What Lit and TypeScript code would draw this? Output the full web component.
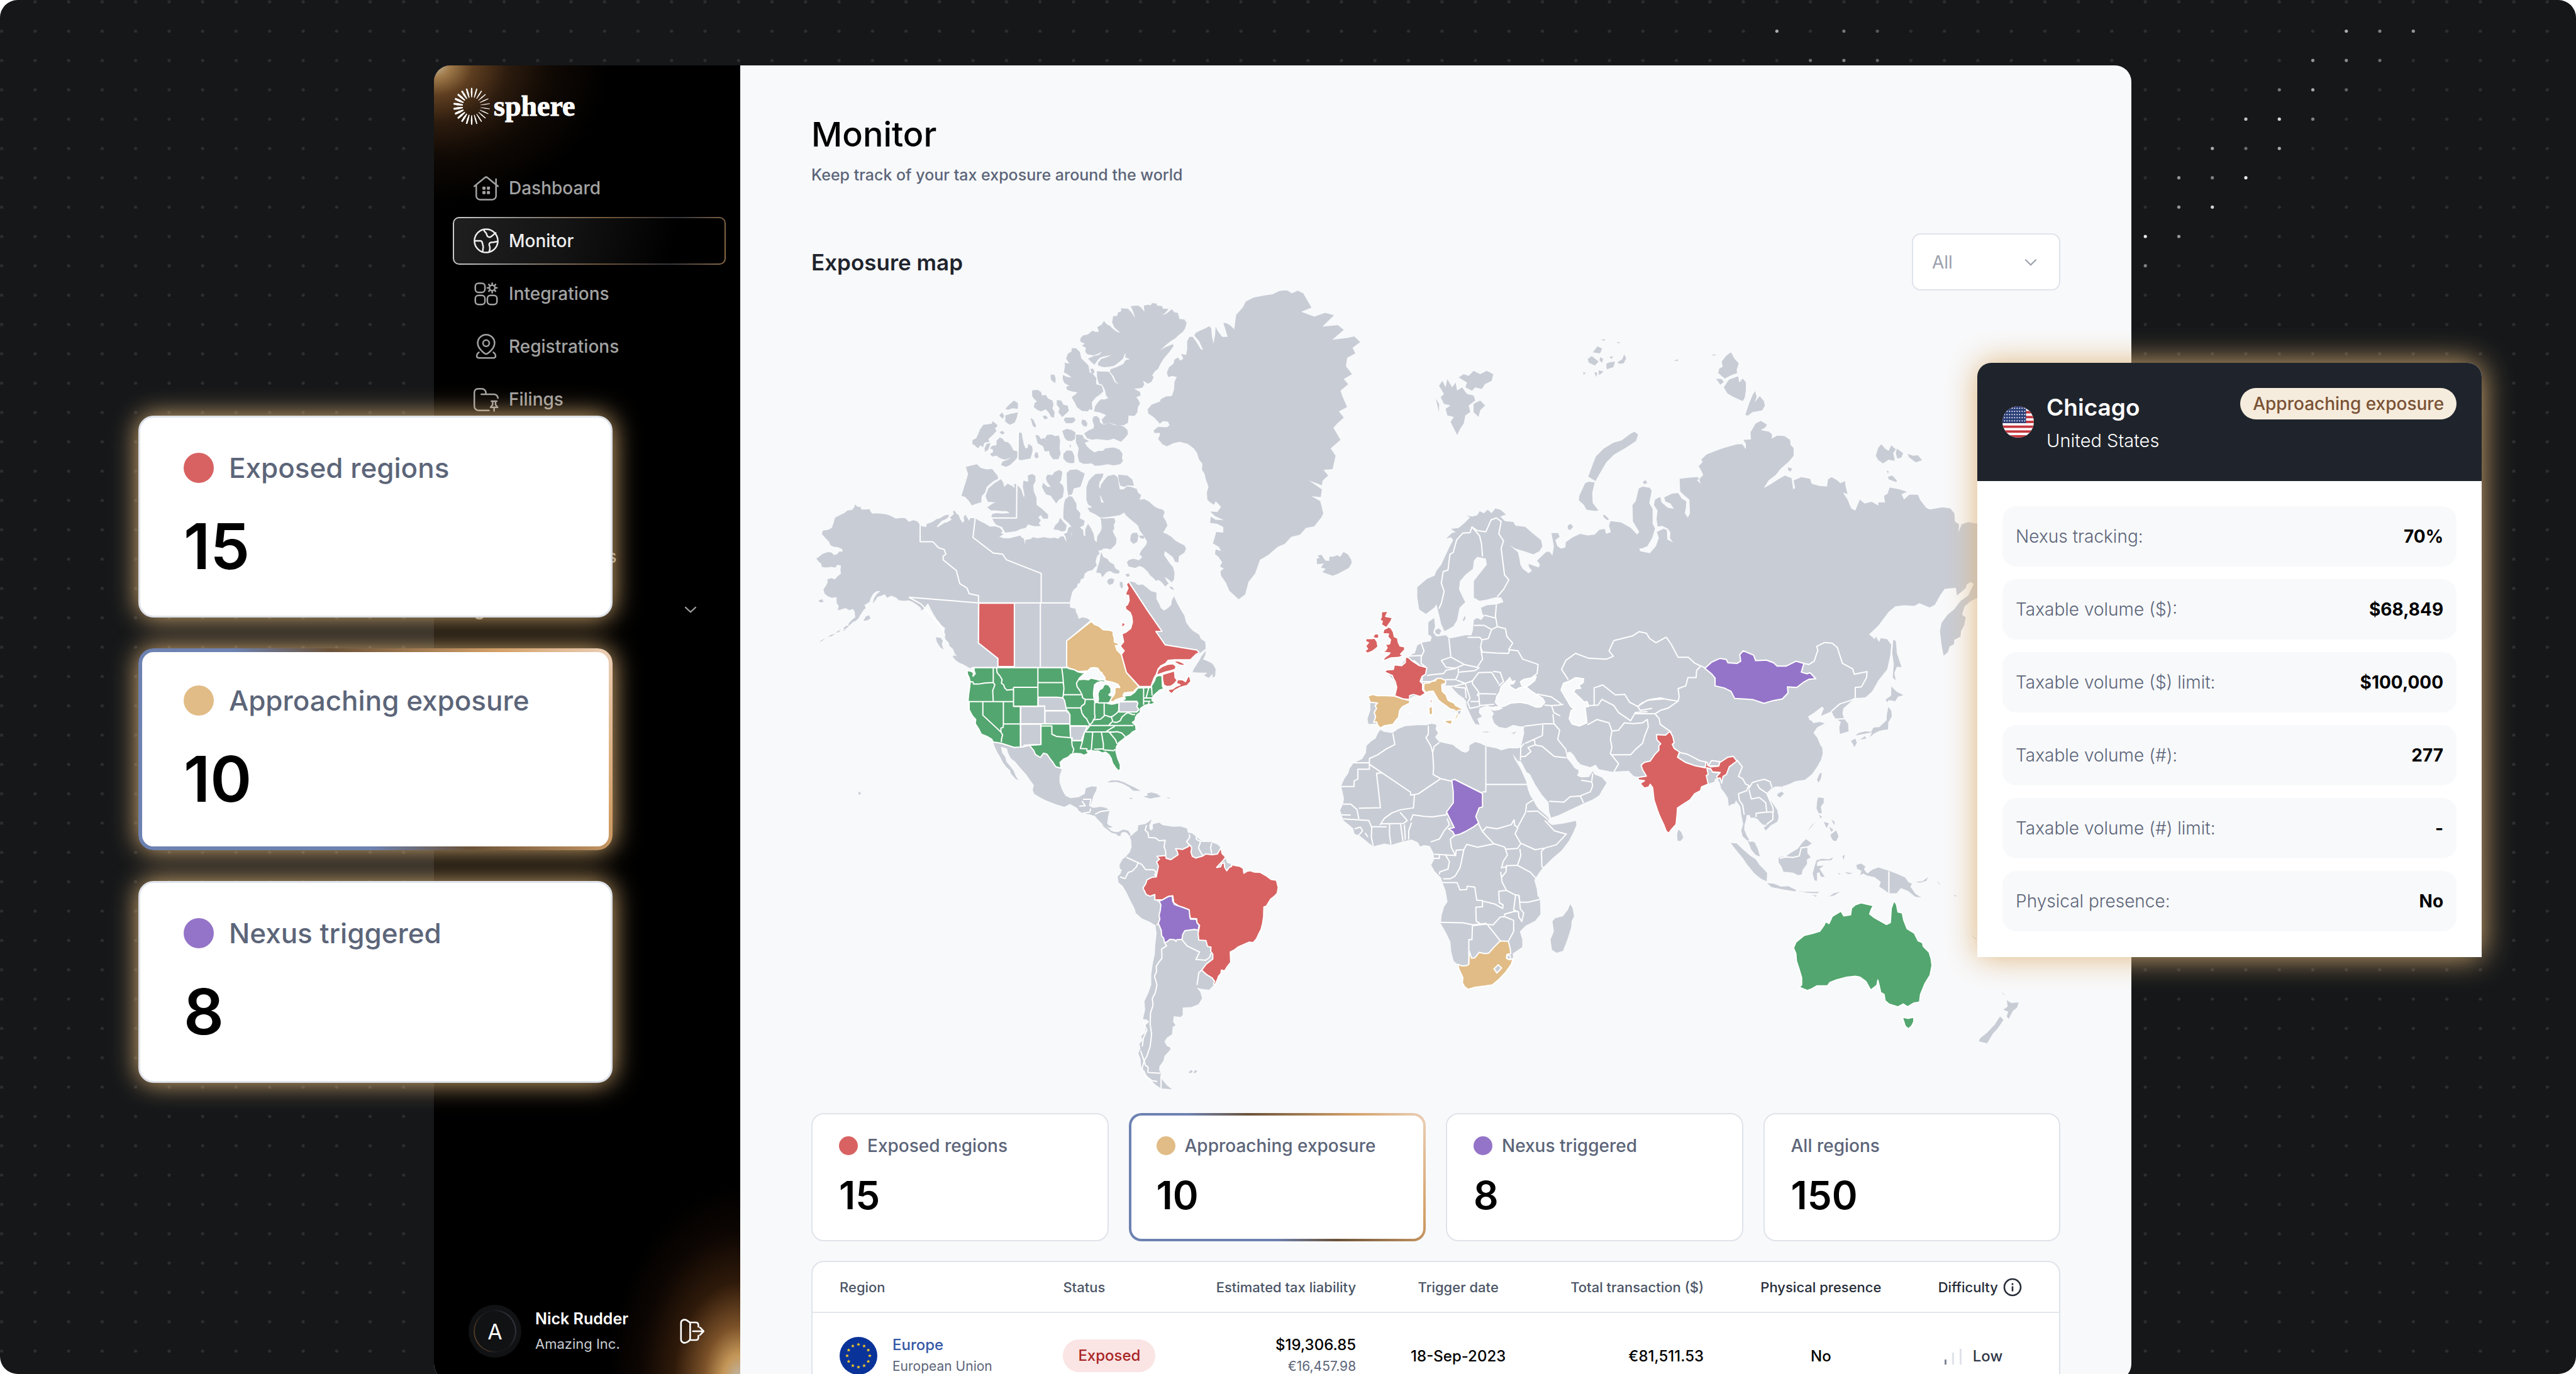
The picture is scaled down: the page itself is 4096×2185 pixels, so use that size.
import { LitElement, html, svg, css } from "lit";
import { customElement, property } from "lit/decorators.js";

type Frame = { t: string; land?: string[]; lines?: string[]; regions?: [string, string][] };

const RED = "#d86262";
const GOLD = "#e1bc86";
const GREEN = "#53a66f";
const PURPLE = "#9474c8";
const GREY = "#c8ccd5";
const SEA = "#f8f9fb";

/* Map sheets. Every sheet holds its outlines in its own grid and is placed on the map by its transform. */
const arctic: Frame = {
  t: "translate(1500 530) scale(.510204 .478316)",
  land: [
    // Alaska and mainland Canada
    "M184,858 192,868 203,868 206,878 222,878 236,877 240,886 246,894 262,893 280,895 298,897 314,903 332,914 350,911 366,912 380,926 396,920 410,924 420,937 428,944 442,947 446,934 458,930 470,924 480,916 492,913 504,905 514,900 526,898 524,908 514,916 500,922 490,934 482,944 484,948 498,938 510,930 520,928 536,918 530,908 538,902 544,896 541,886 546,882 554,895 562,900 566,914 576,930 582,922 580,908 586,898 592,908 600,922 604,912 622,912 640,924 656,932 676,945 694,944 712,950 722,962 716,970 726,974 710,984 726,990 748,990 770,984 788,980 790,986 800,992 804,1014 806,996 824,994 832,986 850,990 872,986 896,990 912,988 926,992 932,984 944,982 956,1006 952,984 946,974 958,968 962,950 972,944 980,952 972,960 974,978 984,970 990,952 1004,948 1016,958 1018,978 1024,984 1024,956 1034,934 1044,950 1054,972 1058,998 1066,1006 1068,982 1080,964 1084,950 1082,924 1080,912 1100,914 1112,912 1130,912 1134,926 1128,938 1130,952 1124,962 1130,976 1138,992 1136,1012 1128,1022 1116,1034 1104,1030 1090,1030 1084,1036 1072,1038 1076,1050 1068,1058 1064,1070 1062,1082 1066,1096 1058,1104 1050,1114 1034,1118 1022,1128 1018,1146 1008,1150 1004,1164 996,1168 994,1180 984,1188 976,1200 972,1218 968,1236 968,1258 974,1262 988,1264 990,1278 996,1290 1000,1304 1014,1298 1030,1302 1042,1310 956,1388 954,1491 612,1491 604,1497 592,1490 580,1482 566,1476 552,1466 540,1452 544,1446 556,1450 548,1440 540,1420 528,1410 526,1398 514,1384 508,1362 512,1340 500,1330 490,1316 482,1306 470,1286 458,1262 450,1244 444,1250 436,1264 424,1272 424,1262 410,1250 396,1240 380,1232 366,1234 344,1232 334,1222 316,1214 300,1222 292,1208 280,1214 266,1218 256,1234 248,1244 252,1226 262,1208 276,1196 262,1196 250,1206 240,1224 236,1238 218,1250 222,1262 214,1270 204,1286 196,1302 186,1312 176,1316 162,1330 150,1332 140,1342 150,1346 138,1352 146,1344 158,1336 160,1322 172,1308 184,1298 182,1276 176,1266 162,1270 148,1262 130,1268 120,1270 124,1254 116,1242 116,1220 98,1222 84,1216 72,1206 68,1190 78,1174 84,1160 82,1150 96,1146 110,1150 120,1138 132,1128 130,1112 132,1096 118,1094 112,1104 96,1102 78,1104 62,1102 60,1090 50,1080 42,1070 52,1062 66,1050 84,1044 98,1046 106,1056 118,1052 126,1042 138,1042 136,1032 118,1024 108,1024 94,1018 88,1004 76,990 62,974 66,960 84,958 98,950 104,934 110,910 128,900 144,892 156,882 172,880 180,870Z",
    "M132,1346 120,1352 112,1358 124,1356Z M110,1362 96,1366 84,1374 98,1372Z M74,1380 60,1388 52,1396 66,1388Z M222,1296 234,1290 240,1302 228,1310 214,1312Z M50,1232 64,1228 68,1238 56,1240Z M478,1376 496,1378 504,1390 500,1402 506,1424 494,1414 482,1394Z",
    // Labrador and Newfoundland
    "M1184,1158 1204,1162 1216,1172 1234,1170 1250,1184 1264,1196 1284,1202 1284,1228 1294,1246 1300,1262 1312,1272 1326,1262 1338,1250 1340,1232 1348,1216 1358,1240 1368,1260 1386,1292 1392,1318 1404,1336 1416,1350 1440,1366 1446,1382 1462,1394 1464,1420 1452,1430 1440,1440 1432,1427 1316,1405 1282,1355 1304,1354Z",
    "M1464,1428 1462,1446 1454,1462 1468,1468 1484,1476 1492,1484 1500,1500 1498,1528 1488,1532 1490,1518 1474,1534 1458,1524 1470,1514 1448,1514 1416,1512 1420,1500 1430,1484 1442,1464 1448,1450Z",
    // Baffin Island and neighbours
    "M1028,792 1036,768 1048,752 1062,740 1090,738 1088,750 1076,772 1074,790 1088,808 1078,824 1082,850 1092,852 1078,820 1080,784 1094,762 1106,748 1130,742 1142,752 1146,776 1150,800 1164,800 1176,788 1190,790 1212,798 1216,812 1228,822 1222,840 1240,838 1258,848 1276,866 1290,874 1306,878 1314,888 1308,906 1318,922 1324,940 1314,958 1308,968 1322,974 1338,984 1354,1000 1370,1010 1386,1018 1392,1030 1386,1046 1366,1060 1364,1084 1352,1082 1344,1064 1328,1050 1314,1040 1312,1056 1322,1072 1334,1090 1344,1102 1350,1124 1348,1150 1340,1162 1330,1152 1314,1140 1320,1154 1328,1166 1316,1178 1302,1160 1290,1152 1282,1156 1272,1144 1262,1136 1252,1120 1236,1104 1222,1098 1206,1106 1182,1100 1176,1084 1184,1074 1200,1070 1220,1076 1232,1064 1222,1052 1230,1036 1246,1016 1250,1004 1240,984 1224,962 1216,940 1202,928 1186,914 1172,900 1166,890 1150,900 1130,904 1100,908 1080,910 1062,898 1040,886 1032,872 1050,870 1034,858 1028,840Z",
    "M1144,742 1178,746 1196,762 1202,786 1178,784 1168,790 1152,786 1146,764Z M1082,1044 1090,1064 1104,1070 1112,1082 1128,1092 1134,1108 1150,1118 1146,1128 1128,1126 1116,1118 1104,1120 1094,1132 1086,1142 1080,1126 1064,1124 1070,1100 1076,1080Z",
    "M1106,1152 1118,1146 1130,1150 1126,1166 1112,1172 1104,1162Z M1150,1160 1160,1162 1162,1180 1156,1186 1150,1174Z M1170,1130 1184,1128 1186,1138 1176,1140Z M1196,970 1212,968 1218,980 1214,1004 1200,1012 1188,1000 1190,980Z M1220,980 1238,980 1240,992 1226,990Z M1330,1178 1342,1180 1348,1192 1338,1188Z",
    // Banks, Victoria, King William, Prince of Wales, Somerset, Boothia
    "M588,712 628,702 642,716 664,722 684,720 704,748 706,758 688,768 664,790 658,812 646,826 644,850 624,856 610,862 600,846 586,830 572,824 580,796 588,770 596,740Z",
    "M716,760 724,772 728,790 740,778 756,786 766,794 764,778 774,780 773,911 680,911 684,896 700,892 720,894 748,892 738,884 720,884 698,882 680,882 666,870 684,856 696,850 668,848 664,838 660,826 670,796 690,778Z",
    "M776,782 790,800 800,832 802,820 796,790 798,766 816,770 814,746 830,740 842,748 842,768 834,784 836,808 846,832 846,860 866,876 888,898 888,914 870,914 862,900 852,908 862,920 854,932 862,942 842,944 826,940 816,936 806,950 788,954 772,962 750,966 732,968 720,946 700,938 690,926 684,912 773,911Z",
    "M932,910 942,924 956,940 952,960 940,964 924,958 908,956 914,940 926,928Z M880,756 886,742 904,744 912,732 930,724 940,732 936,764 930,772 942,784 946,800 942,830 928,840 918,854 908,840 898,824 882,820 874,808 866,790 870,774 886,790 898,790 884,770Z M956,736 968,724 994,722 1010,732 1022,738 1016,760 1006,790 982,796 976,818 962,824 958,800Z M964,826 976,828 992,856 992,876 1006,892 1004,912 1022,922 1018,940 1004,948 988,970 976,976 970,960 978,950 962,930 944,914 944,890 946,860 950,840Z",
    // Parry and Sverdrup islands
    "M612,608 626,600 634,582 640,566 652,548 668,546 682,544 686,534 700,546 704,552 694,562 700,572 688,586 670,604 674,614 656,618 650,636 642,628 632,640 620,628 612,624Z M656,640 664,622 678,620 670,644 658,654Z M700,610 712,598 722,602 730,614 742,616 752,628 762,648 778,652 776,676 764,690 750,704 734,712 716,704 722,692 740,684 754,676 730,684 712,678 700,668 684,672 676,662 688,654 686,644 676,640 684,630 700,628Z M780,600 782,578 792,580 796,606 800,626 806,640 814,638 816,622 830,632 832,648 824,680 808,682 792,686 778,684Z",
    "M710,576 722,572 730,580 720,586Z M842,656 850,656 854,674 844,680 838,670Z M732,512 750,506 778,500 774,520 766,540 748,548 732,536Z M732,486 748,468 764,454 778,464 778,486 758,484 742,490Z M710,512 720,500 728,514 722,524Z M824,522 834,528 844,550 842,560 832,552Z",
    "M830,414 850,412 862,420 866,434 880,432 888,446 904,454 908,470 904,484 912,500 910,520 900,518 890,500 880,488 862,496 846,488 836,478 840,462 848,458 836,446 830,436Z M920,452 936,454 944,470 960,474 964,494 950,508 940,518 926,500 930,484 920,470Z M868,514 880,512 888,522 876,528Z M950,520 984,520 988,532 976,542 954,542 946,530Z M898,352 912,354 916,370 914,386 904,378 898,370Z",
    "M842,588 854,590 862,604 872,600 888,612 876,602 884,588 900,586 914,592 928,590 932,610 930,640 934,660 926,682 906,682 894,664 892,650 876,652 870,632 850,620Z M944,662 956,648 976,650 984,670 984,696 970,698 956,694 944,680Z M966,626 972,628 970,640Z M1012,528 1024,530 1032,544 1028,556 1016,552 1010,542Z M940,572 956,564 974,568 988,578 986,604 974,612 958,610 948,598Z",
    "M990,586 1014,588 1020,602 1038,612 1022,618 1030,632 1042,644 1058,656 1072,650 1088,650 1098,640 1128,636 1148,644 1154,652 1160,660 1158,680 1162,688 1152,702 1128,706 1104,702 1084,706 1060,708 1046,698 1034,700 1016,700 1002,692 996,668 1000,640 990,616Z",
    "M1020,582 1036,570 1054,562 1056,552 1050,530 1054,516 1066,514 1076,524 1078,540 1092,548 1110,540 1132,550 1152,550 1166,556 1178,568 1180,584 1168,600 1154,614 1140,608 1128,602 1108,608 1088,606 1066,604 1048,606 1030,600Z",
    // Ellesmere and Axel Heiberg
    "M1122,150 1126,124 1140,124 1144,110 1156,106 1154,94 1180,96 1194,112 1206,132 1200,110 1190,86 1218,84 1228,92 1240,108 1238,84 1256,80 1262,84 1268,74 1284,76 1286,84 1304,86 1308,96 1328,96 1318,110 1304,122 1322,114 1340,98 1350,110 1362,112 1368,136 1386,138 1394,152 1388,174 1380,186 1366,198 1352,212 1336,222 1320,236 1298,258 1316,246 1344,234 1346,242 1330,266 1312,288 1298,312 1290,330 1278,340 1268,356 1274,362 1266,380 1252,388 1242,380 1234,378 1240,390 1232,404 1202,408 1224,420 1226,434 1210,440 1216,448 1224,464 1216,480 1214,500 1204,514 1182,512 1180,540 1164,550 1140,550 1112,540 1090,546 1084,528 1100,510 1076,500 1056,496 1060,476 1072,458 1082,448 1094,450 1108,444 1100,434 1096,414 1086,392 1074,388 1068,368 1066,340 1110,342 1120,356 1132,382 1148,392 1136,380 1128,360 1114,342 1116,332 1142,322 1162,312 1172,296 1188,292 1170,286 1172,268 1182,254 1168,274 1162,290 1152,300 1130,318 1112,322 1092,324 1072,318 1070,308 1082,292 1104,284 1120,276 1090,282 1076,288 1064,304 1058,314 1046,304 1034,290 1056,280 1074,276 1086,262 1070,272 1054,278 1032,274 1024,264 1026,248 1012,240 1022,232 1006,224 1006,212 1016,200 1034,196 1050,182 1062,186 1074,186 1068,168 1084,158 1092,144 1104,158 1114,162 1122,172 1140,186 1152,190 1140,178 1130,168Z",
    "M974,250 990,250 1004,264 1010,290 1026,306 1036,318 1040,344 1054,352 1064,366 1064,390 1084,396 1090,418 1078,430 1062,442 1048,460 1050,490 1038,488 1034,496 1012,494 994,480 986,462 974,440 986,432 996,422 976,418 958,412 954,400 966,396 948,386 942,372 942,354 958,362 974,364 958,350 946,344 950,318 948,306 966,310 954,290 960,272 974,262Z M1042,330 1054,330 1058,344 1048,352Z",
    // Greenland
    "M1568,176 1552,160 1538,152 1528,152 1534,170 1544,206 1524,206 1508,184 1500,166 1498,200 1492,232 1486,200 1484,172 1476,164 1464,172 1442,182 1428,190 1422,200 1440,222 1454,256 1446,254 1430,226 1416,206 1404,206 1396,224 1396,256 1392,276 1374,272 1382,290 1372,298 1362,286 1350,294 1346,310 1330,324 1322,344 1326,362 1342,358 1358,362 1350,380 1348,412 1340,436 1318,438 1300,448 1296,458 1266,470 1252,488 1254,504 1276,520 1288,534 1296,544 1308,534 1326,536 1332,550 1322,558 1290,556 1274,570 1276,580 1296,580 1296,590 1290,604 1306,624 1322,632 1346,620 1368,614 1398,622 1420,640 1432,658 1440,684 1452,700 1450,722 1460,740 1464,760 1474,790 1468,812 1470,840 1480,850 1494,860 1500,846 1520,868 1506,888 1480,886 1498,904 1530,920 1500,918 1482,906 1480,930 1506,934 1528,946 1528,968 1502,966 1496,990 1490,1010 1512,1024 1520,1040 1500,1034 1498,1052 1510,1062 1524,1084 1516,1100 1530,1108 1518,1118 1520,1136 1538,1164 1550,1194 1568,1212 1584,1228 1608,1209 1620,1160 1644,1128 1662,1074 1692,1055 1728,1023 1752,1012 1776,985 1808,976 1830,950 1860,944 1886,909 1893,893 1882,846 1850,826 1884,830 1888,800 1840,764 1888,784 1891,765 1911,746 1894,724 1927,721 1938,669 1920,640 1956,607 1930,560 1944,543 1968,520 1950,496 1980,479 1964,440 1956,415 1984,390 1968,370 1998,351 1976,320 1980,287 2010,270 2000,248 2028,226 2006,204 1980,210 1926,217 1968,178 1946,160 1890,166 1932,121 1900,112 1860,127 1812,108 1850,92 1836,66 1820,36 1800,26 1778,36 1758,22 1730,28 1708,40 1680,44 1640,52 1610,68 1600,90 1575,120Z",
  ],
  lines: [
    "M421,937 421,1004 468,1004 488,1027 509,1034 515,1052 505,1060 505,1074 553,1116 566,1167 592,1184 600,1206 634,1214 634,1398 705,1458 705,1491",
    "M380,1220 634,1242 968,1242 M380,1220 400,1232 424,1246 450,1276 476,1310 500,1340 512,1370 M622,912 614,987 688,1048 722,1052 736,1074 863,1127 863,1242 M765,1242 765,1491 M860,1242 860,1491 M779,576 778,690 M774,780 773,911 680,911",
  ],
  regions: [[RED, "M635,1243 765,1243 765,1490 705,1490 705,1458 634,1398Z"]],
};

const svalbard: Frame = {
  t: "scale(3.0612)",
  land: [
    "M876,235 878,232 880,236 881,231 884,236 886,233 887,238 890,236 893,240 897,241 898,244 894,247 895,251 892,253 891,258 889,261 887,265 885,261 883,257 885,254 881,253 880,249 883,247 879,246 877,242 879,240Z M888,230 891,228 894,229 897,226 901,228 905,226 909,228 908,232 904,234 902,237 898,236 896,238 892,236 893,233Z M897,246 901,244 904,247 901,250 900,254 897,251Z M874,243 876,246 876,251Z",
  ],
};

const states: Frame = {
  t: "translate(1500 1050) scale(.510204 .333333)",
  land: [
    // Mexico and Central America
    "M688,1004 714,1006 764,1032 800,1030 820,1022 838,1052 846,1072 862,1088 872,1066 884,1070 898,1098 908,1118 914,1140 938,1152 930,1190 930,1226 940,1270 952,1300 970,1314 1000,1308 1012,1298 1022,1290 1026,1258 1048,1248 1066,1250 1064,1270 1054,1300 1050,1320 1044,1348 1042,1362 1054,1368 1080,1362 1100,1368 1112,1384 1108,1410 1104,1456 1110,1466 1124,1474 1112,1480 1100,1470 1086,1458 1068,1430 1060,1414 1040,1404 1014,1398 1000,1384 994,1368 968,1346 948,1362 920,1350 880,1326 860,1310 838,1290 832,1270 836,1240 826,1220 808,1180 790,1150 768,1110 752,1090 742,1060 738,1036 716,1026 720,1060 732,1084 736,1110 752,1140 762,1160 770,1190 780,1214 770,1206 752,1176 750,1160 736,1140 724,1116 712,1080 704,1060 694,1028Z",
    "M1104,1224 1120,1214 1144,1214 1166,1226 1184,1240 1206,1256 1226,1272 1200,1272 1184,1252 1160,1232 1136,1222 1114,1226Z M1236,1304 1252,1300 1250,1286 1266,1282 1286,1290 1300,1306 1280,1310 1262,1316 1244,1308Z M1184,1312 1198,1314 1190,1320Z M1322,1310 1336,1312 1326,1316Z M194,1276 206,1286 198,1296Z",
  ],
  lines: ["M1016,1320 1044,1320 1040,1358 M1002,1358 1024,1356 1012,1330 M1044,1372 1040,1392 1014,1398 M1060,1404 1080,1388 1110,1382"],
  regions: [
    [GOLD, "M1046,325 1058,343 1074,352 1090,372 1110,374 1126,380 1126,400 1130,420 1130,440 1146,450 1144,462 1134,460 1140,486 1150,502 1156,510 1174,610 1220,690 1204,712 1200,720 1180,722 1166,726 1162,738 1168,748 1154,754 1138,762 1124,776 1116,772 1114,760 1126,744 1132,726 1132,700 1140,692 1150,696 1144,678 1128,668 1112,662 1096,658 1096,640 1090,628 1084,612 1078,608 1070,588 1058,584 1044,586 1034,602 1016,604 998,606 980,594 966,588 956,578 956,434Z"],
    [RED, "M1182,103 1250,262 1304,381 1282,382 1316,457 1432,486 1440,500 1428,510 1408,540 1380,540 1350,540 1326,544 1318,560 1300,574 1290,592 1284,620 1276,640 1270,664 1264,690 1222,690 1174,610 1156,510 1166,490 1158,476 1152,462 1164,440 1158,396 1172,386 1190,364 1196,330 1194,300 1188,276 1172,258 1170,240 1178,232 1184,210 1182,180 1170,178 1174,160 1180,140 1174,118Z"],
    [RED, "M1286,614 1290,596 1304,578 1324,566 1344,562 1356,576 1352,594 1336,602 1314,610 1292,622 1284,628Z M1348,544 1366,548 1386,562 1384,574 1366,568 1352,556Z M1306,622 1350,602 1352,640 1360,654 1348,676 1336,688 1322,690 1310,680 1306,650Z M1330,720 1326,706 1344,702 1356,688 1370,680 1356,672 1362,650 1380,652 1390,662 1398,636 1404,630 1410,660 1396,684 1372,694 1352,710 1340,730Z M1154,322 1160,324 1158,330 1172,340 1164,354 1152,356 1158,342Z"],
    [GREEN, "M592,600 606,604 616,612 614,632 622,618 618,600 618,584 956,584 966,590 984,596 998,608 1012,612 1028,610 1014,626 1002,644 1000,652 1018,648 1036,652 1044,642 1062,648 1074,654 1090,652 1102,660 1094,664 1080,662 1068,668 1058,680 1056,700 1054,730 1056,762 1060,780 1070,778 1072,760 1070,730 1076,708 1086,700 1092,682 1098,676 1110,682 1118,700 1118,724 1110,736 1116,742 1122,734 1122,746 1116,766 1112,778 1104,784 1120,788 1130,786 1144,780 1158,770 1170,758 1166,742 1190,738 1204,722 1216,698 1262,696 1268,680 1276,660 1282,634 1292,628 1304,628 1306,690 1312,702 1296,710 1284,726 1274,740 1268,754 1268,768 1280,780 1268,788 1254,790 1240,796 1226,812 1224,836 1214,846 1208,860 1206,880 1196,890 1208,908 1210,934 1196,944 1186,960 1172,972 1160,988 1146,1004 1138,1026 1136,1052 1142,1088 1152,1126 1152,1152 1146,1162 1136,1146 1124,1120 1118,1090 1110,1070 1098,1056 1086,1062 1072,1050 1058,1052 1044,1046 1030,1050 1036,1062 1020,1074 1008,1066 988,1064 972,1068 962,1084 944,1096 932,1114 936,1146 916,1138 906,1114 896,1094 884,1068 872,1062 860,1086 842,1070 836,1048 820,1018 800,1020 788,1028 764,1030 716,1006 688,1000 682,984 664,968 644,956 636,930 622,896 624,874 612,854 600,820 600,776 596,768 598,736 602,690 604,664 600,640 594,622Z"],
    [GREY, "M852,749 920,749 942,753 948,766 952,796 956,824 876,824 876,799 852,799Z M788,800 876,800 876,898 788,898Z M877,826 960,826 968,848 968,898 877,898Z M788,900 862,900 862,1014 820,1016 800,1018 800,1026 788,1026Z M969,910 1026,912 1030,918 1020,950 1012,980 1012,992 976,992 976,976 970,974Z M1147,776 1212,774 1216,784 1212,802 1220,818 1212,832 1147,832Z"],
    ["none", "M602,662 614,664 616,676 634,676 656,670 690,667 M688,584 688,667 694,680 686,712 688,774 M700,584 702,612 712,630 720,650 718,672 726,680 730,698 738,710 756,706 762,708 M762,694 850,694 M851,584 851,798 M851,668 943,668 M938,584 942,630 944,668 946,700 944,735 942,752 M596,774 762,774 M762,694 762,800 851,800 M650,774 650,850 716,944 M725,774 725,900 724,918 716,922 716,944 722,960 718,984 718,1000"],
    ["none", "M762,800 788,800 M787,800 787,1026 M725,899 968,899 968,908 970,976 M862,899 862,1014 820,1018 M864,910 902,910 902,956 918,968 940,972 962,974 974,978 976,1020 982,1040 978,1062 M944,735 1012,735 M1000,650 992,670 994,690 1004,712 1012,735 1014,752 1024,762 1022,786 1010,800 1008,812 1012,838 1020,858 1028,868 1034,886 1040,904 M956,809 1006,809 M956,824 960,836 M1022,762 1054,762 M968,909 1030,909 1030,914 1040,908"],
    ["none", "M1058,780 1058,840 1060,862 1054,876 M1093,782 1093,850 M1070,781 1120,781 M1040,904 1050,890 1054,876 1080,872 1096,850 1116,860 1124,856 1138,840 1146,826 1147,778 M1120,862 1124,884 1110,906 M1126,888 1140,890 1152,880 1158,860 1172,842 1180,836 1196,846 1206,846 M1036,908 1200,908 M1026,944 1130,944 M1098,944 1116,926 1132,912 M1112,946 1140,942 1158,950 1170,970 M1112,946 1122,964 1134,986 1140,1010"],
    ["none", "M1040,910 1030,930 1020,950 1016,980 1012,1006 1006,1036 1030,1038 1030,1050 M976,992 1014,992 M1051,946 1046,1048 M1083,946 1090,1010 1090,1040 M1056,1040 1090,1038 1092,1044 1128,1048 1134,1040 M1158,772 1212,772 1216,784 M1237,696 1237,792 M1256,696 1250,730 1246,754 M1266,690 1268,740 M1237,754 1266,754 M1237,772 1262,772 M1256,772 1256,790"],
  ],
};

const southAmerica: Frame = {
  t: "translate(2000 1480) scale(.333333 .382653)",
  land: [
    "M160,150 176,150 210,178 226,184 250,186 280,174 306,178 320,194 316,206 300,190 284,184 268,190 264,204 250,204 240,194 216,190 200,180 176,164Z",
    "M438,124 420,136 404,146 382,150 364,152 360,178 344,188 330,200 316,206 324,228 326,260 316,284 296,304 274,320 258,348 262,366 272,368 264,388 248,404 254,432 276,448 296,476 320,520 344,560 350,580 384,606 430,624 460,640 466,680 458,740 456,780 444,830 436,880 436,930 420,970 398,1010 402,1050 390,1096 414,1100 424,1110 400,1130 406,1160 380,1180 388,1200 370,1216 376,1240 364,1262 376,1290 380,1330 400,1350 410,1370 430,1390 460,1416 490,1434 552,1438 520,1416 496,1390 488,1358 480,1344 482,1326 504,1300 510,1276 544,1244 540,1234 524,1228 510,1206 522,1188 552,1170 556,1134 572,1126 558,1110 562,1082 600,1086 612,1076 612,1040 660,1038 700,1024 720,996 710,964 690,944 720,950 760,954 786,930 806,900 826,862 846,862 878,826 880,770 920,746 960,728 1006,722 1024,704 1050,660 1060,620 1064,550 1080,546 1100,514 1140,486 1146,456 1136,420 1110,416 1080,396 1040,382 990,376 954,380 950,360 900,346 860,336 850,310 838,296 828,264 806,246 770,234 720,234 706,222 684,206 664,192 640,188 636,168 600,158 560,160 530,156 500,152 480,140 450,146 444,150 446,170 436,178 426,170 426,150 432,140Z",
    "M644,1356 660,1344 668,1352 656,1360Z M672,1356 684,1344 694,1350 680,1360Z",
  ],
  lines: [
    "M410,152 402,176 418,190 422,212 460,214 480,228 514,226 508,256 516,278 518,300 M648,196 652,210 634,232 648,248 M686,208 690,222 712,232 700,262 712,284 724,300 M774,238 768,262 774,290 M296,308 340,326 362,334 384,344 404,368 450,370 464,380 456,394 466,404 M362,334 354,354 330,376 308,382 290,412 262,404 M470,520 480,522 M484,610 476,630 466,640",
    "M510,724 522,740 494,756 496,800 478,820 464,840 466,864 454,888 468,930 458,970 442,996 446,1030 432,1066 430,1120 438,1170 430,1230 410,1280 398,1296 402,1320 418,1330 418,1356 488,1360 M491,1370 491,1434 M608,710 636,740 706,770 686,806 740,810 762,796 770,776 M718,858 702,870 692,930 M390,1110 412,1150 392,1190 386,1230 M376,1250 396,1300 384,1340 M400,1370 440,1396 470,1400",
  ],
  regions: [
    [RED, "M468,304 516,300 520,314 546,320 586,296 582,282 572,266 612,270 644,256 652,248 662,262 658,284 666,304 684,312 724,302 742,292 776,296 806,292 826,262 832,290 852,308 838,324 820,340 802,358 824,354 830,340 844,334 846,356 858,374 872,358 886,352 884,344 904,348 930,352 950,362 954,386 972,376 990,374 1010,380 1046,382 1078,398 1106,416 1136,420 1146,456 1140,484 1122,500 1102,514 1080,546 1066,550 1064,600 1058,632 1050,660 1038,680 1024,706 1006,724 982,722 946,736 920,746 900,760 878,770 880,820 862,840 846,862 828,858 826,874 812,888 806,904 792,930 784,926 790,912 776,896 746,880 718,858 744,828 780,804 780,780 768,766 770,746 750,742 742,714 702,712 698,680 706,640 692,628 690,608 656,606 650,590 644,566 618,554 590,546 562,530 556,496 530,500 498,516 456,516 456,490 430,498 408,490 390,458 406,436 412,418 440,406 464,404 476,352 466,330 482,318Z"],
    [PURPLE, "M480,522 498,516 530,500 554,497 556,522 566,538 590,546 618,554 648,564 652,600 656,610 688,610 692,628 704,640 698,664 680,660 624,666 612,684 608,708 578,710 574,718 568,710 540,708 524,720 510,724 506,704 494,690 492,664 476,630 484,610 480,590 486,570 490,540Z"],
  ],
};

const europe: Frame = {
  t: "translate(2400 850) scale(.446429 .382653)",
  land: [
    // Europe, western Asia, Arabia and Africa
    "M540,640 560,620 580,600 612,584 620,560 640,530 660,480 672,450 690,410 680,396 660,404 684,376 700,372 680,356 712,352 740,324 760,300 744,290 768,296 790,290 800,270 818,280 834,262 850,280 866,256 888,264 910,286 886,296 906,318 940,322 950,340 990,346 1020,376 1056,410 1062,440 1050,464 1024,480 990,466 950,452 926,436 960,470 966,500 970,530 980,550 1004,572 1018,560 1006,540 1004,526 1046,544 1052,530 1040,510 1076,470 1090,466 1104,486 1110,440 1100,376 1128,376 1134,394 1116,410 1124,440 1140,452 1158,446 1160,420 1190,396 1220,380 1250,388 1280,384 1300,360 1322,356 1328,380 1348,372 1340,340 1346,318 1390,324 1430,350 1458,384 1466,370 1440,320 1438,240 1452,220 1464,160 1480,150 1510,156 1518,170 1508,230 1522,260 1522,330 1532,354 1520,400 1500,440 1480,450 1466,452 1470,464 1510,474 1536,440 1548,400 1540,370 1569,355 1569,1562 1450,1562 1440,1556 1422,1534 1352,1538 1298,1526 1284,1504 1262,1516 1222,1502 1208,1486 1192,1456 1178,1440 1162,1446 1162,1470 1180,1494 1196,1520 1204,1526 1212,1530 1212,1546 1206,1556 1222,1566 1256,1564 1272,1536 1280,1552 1310,1566 1330,1592 1310,1630 1300,1652 1274,1672 1234,1692 1180,1722 1130,1750 1098,1762 1090,1730 1088,1688 1060,1650 1032,1600 1010,1550 996,1540 974,1490 966,1486 960,1486 938,1450 946,1476 968,1518 994,1584 1002,1626 1012,1656 1024,1676 1034,1700 1046,1720 1072,1746 1090,1766 1084,1782 1102,1798 1152,1790 1202,1778 1204,1798 1190,1836 1172,1876 1142,1922 1102,1962 1062,2008 1046,2034 1028,2066 1038,2106 1042,2142 1052,2160 1054,2232 1032,2264 992,2288 968,2316 978,2356 978,2392 958,2408 938,2424 940,2448 932,2476 908,2516 882,2548 854,2576 822,2582 782,2588 752,2598 738,2586 728,2566 730,2540 714,2500 708,2476 692,2460 682,2416 678,2366 658,2318 638,2278 642,2236 652,2196 666,2172 658,2116 644,2076 640,2056 612,2022 598,1992 610,1966 608,1936 592,1900 568,1896 552,1902 542,1882 516,1868 478,1878 432,1894 402,1888 356,1902 334,1882 302,1852 278,1840 272,1814 252,1794 232,1776 224,1748 218,1726 230,1696 234,1670 228,1636 222,1608 236,1572 252,1546 258,1522 274,1496 310,1476 326,1446 328,1412 348,1390 366,1376 376,1350 386,1334 400,1344 436,1350 460,1330 490,1316 540,1312 580,1312 600,1304 620,1310 616,1330 626,1350 614,1370 632,1394 690,1408 700,1420 726,1440 742,1446 756,1436 758,1410 782,1394 806,1402 826,1414 870,1424 890,1434 920,1424 960,1424 972,1420 980,1380 986,1350 984,1330 988,1316 970,1318 940,1310 910,1326 880,1320 860,1300 852,1270 860,1256 850,1240 850,1222 830,1216 800,1228 796,1250 810,1270 790,1280 800,1310 782,1306 770,1280 760,1256 746,1220 744,1196 734,1180 710,1160 690,1136 680,1120 656,1122 662,1104 656,1110 642,1120 644,1150 660,1164 666,1184 700,1220 724,1240 712,1266 700,1290 706,1256 690,1240 660,1220 640,1200 620,1170 610,1150 588,1146 570,1160 540,1168 520,1170 506,1186 510,1200 480,1220 466,1240 460,1270 440,1300 400,1316 384,1326 370,1304 336,1306 332,1280 344,1240 344,1200 336,1180 350,1164 400,1168 446,1172 456,1130 440,1090 420,1064 402,1050 410,1042 440,1040 442,1020 470,1024 494,986 500,978 530,960 540,924 560,910 596,902 600,880 586,870 586,810 610,790 614,830 606,860 620,880 660,874 672,890 700,884 740,874 766,874 772,850 776,800 790,790 806,800 820,780 812,770 806,740 830,728 870,724 900,712 890,690 870,688 830,700 800,706 776,690 776,610 796,580 830,530 826,500 790,492 776,510 772,550 740,580 718,610 714,650 730,690 740,712 716,740 706,800 690,830 654,854 640,820 630,770 620,724 610,740 576,770 548,748 540,690Z",
    "M1256,126 1280,130 1270,180 1272,230 1296,266 1280,268 1246,262 1236,240 1214,216 1216,196 1230,160 1240,134Z M1168,340 1180,330 1190,346 1178,362 1168,356Z M1316,286 1324,290 1340,308 1334,314 1318,300Z M1482,126 1492,118 1500,132 1486,138Z",
    "M120,500 132,498 124,486 140,482 156,510 172,512 174,490 188,492 206,484 218,492 232,468 250,480 264,506 266,522 254,546 228,562 206,576 186,584 168,576 144,566 158,550 138,544 150,524 122,528Z",
    "M808,1342 844,1344 828,1348Z M932,1350 954,1344 944,1354Z M614,850 630,840 640,852 632,870 618,866Z M730,800 738,780 742,790 734,806Z",
    // Madagascar
    "M1178,2184 1188,2202 1194,2242 1184,2266 1182,2296 1166,2356 1148,2410 1122,2420 1102,2406 1096,2356 1110,2316 1104,2266 1116,2252 1148,2242 1168,2212Z",
  ],
  lines: [
    // Nordic and eastern Europe
    "M630,744 640,720 652,660 640,620 648,564 668,556 676,480 690,470 704,410 730,376 760,374 768,346 800,390 808,430 812,490 M768,346 790,364 826,370 848,312 870,302 890,320 880,380 900,414 890,450 904,580 922,604 900,650 874,686 M870,724 866,780 874,832 908,842 914,880 938,912 920,946 M820,776 866,790 M776,826 820,826 850,846 836,890 810,896 800,884 750,884 M850,846 874,832 M810,896 804,930 812,956 870,960 920,962 926,944 960,950 980,990 1044,1016 1040,1060 1020,1078",
    "M672,890 680,980 M640,996 680,980 736,1016 700,1034 660,1030 640,996 M736,1016 790,1030 812,990 804,930 M712,1036 710,1054 780,1046 800,1030 M580,1070 600,1066 650,1060 660,1044 700,1036 M656,1090 700,1090 712,1060 M704,1092 740,1108 770,1096 796,1056 850,1054 880,1110 M856,1050 886,1054 900,1100 880,1120 M770,1096 770,1110 796,1150 790,1170 M796,1158 870,1160 M796,1158 800,1216 860,1210 M656,1122 692,1122 740,1108 M696,1126 740,1130 744,1180 M740,1108 760,1180 750,1200 760,1230 800,1220 M762,1196 796,1196 M560,1076 560,1100 600,1100 620,1086 M556,910 568,950 556,980 556,1010 576,1030 M500,976 556,972 M524,996 550,1020",
    // Middle East and central Asia
    "M988,1316 1060,1306 1110,1304 1106,1258 M1064,1310 1062,1362 1028,1380 990,1400 M1110,1304 1134,1336 1126,1380 1160,1430 1162,1446 M1028,1380 1032,1408 1060,1414 1112,1464 1160,1470 M1030,1408 1002,1420 1014,1440 990,1464 974,1464 M986,1400 972,1420 970,1484 M1040,1160 1100,1174 1140,1208 M1070,1214 1100,1216 1130,1214 1150,1210 M1100,1216 1110,1250 1136,1266 M1250,1310 1290,1284 1340,1300 1352,1340 1346,1380 1352,1420 1346,1450 1360,1470 1380,1500 1360,1540 M1350,1456 1430,1456 1450,1430 1480,1400 1490,1360 1504,1320 M1352,1340 1380,1336 1404,1300 1440,1304 1480,1300 1500,1284 1504,1320",
    "M1278,1212 1278,1130 1314,1116 1366,1164 1406,1162 1426,1200 1460,1220 1500,1190 1568,1184 M1258,1216 1294,1214 1310,1186 1360,1216 1380,1250 1430,1290 1450,1250 1500,1246 M1460,1220 1470,1240 1520,1230 M1170,1090 1142,1040 1160,996 1200,962 1256,986 1330,990 1358,976 1340,950 1360,900 1440,876 1466,856 1496,864 1510,890 1536,910 1579,883",
    "M1224,1580 1268,1588 1272,1606 1262,1636 1220,1656 1234,1690 M1090,1682 1152,1686 1178,1660 1220,1656 M1268,1586 1272,1546",
  ],
};

const africa: Frame = {
  t: "translate(2450 1300) scale(.446429 .382653)",
  lines: [
    "M326,176 334,230 300,250 262,280 228,298 228,350 180,350 180,398 164,408 164,434 110,434 M162,319 228,319 M228,326 400,462 400,476 432,470 526,396 M280,368 258,370 274,538 184,540 M118,520 150,520 176,546 184,592 M474,138 474,180 464,196 484,236 492,268 M520,220 498,240 492,268 496,340 494,376 526,396 570,408 584,400 700,468 M714,240 714,460 700,460 M716,424 886,424 M416,476 412,538 356,548 320,564 290,590 272,622 M400,600 410,572 456,580 490,582 548,572 552,562 M276,616 370,614 386,600 356,560 M118,592 226,600 236,630 300,630 M166,640 190,632 200,650 180,676 M210,660 222,680 M238,630 236,680 244,724 M312,616 312,670 318,716 M358,616 368,700 M374,620 378,694 M404,610 392,650 392,692 M112,572 150,574",
    "M552,590 562,620 540,650 520,690 484,704 M584,672 566,690 570,730 586,768 M498,764 588,770 590,744 622,742 634,716 680,730 746,714 M684,616 700,654 746,712 790,728 800,742 M700,654 716,632 760,640 820,620 832,596 834,622 848,636 836,664 860,712 846,736 796,740 804,768 786,800 780,830 M848,630 880,560 884,520 912,500 M886,556 930,554 974,596 M960,600 976,620 1000,650 1050,666 1008,718 960,734 920,742 862,712 M960,734 946,750 948,824 956,832 M856,738 860,770 846,818 796,820 M846,818 900,852 922,880 M776,830 800,826 798,850 780,876 M776,850 782,900 800,940 836,962 852,964 856,998 890,998 940,984",
    "M800,940 768,944 770,1000 786,1010 784,1028 750,1006 700,992 M532,902 594,902 606,938 634,936 636,920 668,924 676,988 700,990 700,1020 672,1022 674,1090 690,1102 M622,742 612,800 606,830 586,870 564,884 536,884 M520,764 520,784 496,784 M546,768 562,800 556,836 522,850 520,862 M526,1096 620,1098 660,1108 718,1100 M658,1112 656,1180 643,1180 643,1300 M658,1112 718,1104 750,1150 774,1186 M718,1106 744,1108 774,1070 792,1068 830,1086 830,1140 808,1188 M792,1066 792,1056 834,1042 850,1044 M852,964 858,1030 872,1050 864,1092 852,1070 850,1044 830,1036 838,964",
  ],
  regions: [
    [PURPLE, "M572,404 584,400 700,468 700,534 686,538 672,580 684,612 664,630 628,654 602,668 584,672 576,654 558,640 582,634 570,606 550,558 578,514 578,460Z"],
    [GOLD, "M597,1300 616,1308 634,1306 643,1300 645,1236 654,1270 668,1268 686,1242 710,1248 726,1246 750,1214 774,1186 808,1188 816,1226 818,1248 802,1252 800,1270 812,1278 828,1272 820,1300 796,1340 770,1372 742,1400 710,1406 670,1412 640,1422 626,1410 616,1390 618,1364 602,1324Z"],
    [GREY, "M748,1322 766,1302 780,1318 760,1342Z M802,1254 816,1258 816,1276 804,1274Z"],
  ],
};

const euroRegions: Frame = {
  t: europe.t,
  regions: [
    [RED, "M390,760 418,756 408,782 436,788 430,806 414,832 430,838 440,858 444,880 458,888 460,906 468,926 486,930 488,944 478,956 470,966 482,972 462,982 430,984 412,992 394,1000 404,982 420,968 426,960 394,956 408,946 414,934 406,918 424,916 428,896 416,880 420,868 396,866 400,846 414,838 404,832 390,822 394,806 384,800 390,784Z M326,890 350,890 362,888 372,904 376,930 366,940 352,952 332,962 320,950 332,940 324,926 336,910 324,904Z M354,884 362,868 378,866 380,886 368,890Z M344,868 354,864 348,876Z"],
    [RED, "M490,980 502,982 520,1000 546,1020 580,1032 574,1064 560,1074 552,1098 562,1110 562,1140 574,1156 552,1172 524,1162 508,1168 508,1186 480,1184 446,1168 454,1128 448,1100 440,1084 436,1070 402,1052 412,1042 440,1040 444,1018 474,1022 490,1006Z M594,1188 602,1186 600,1206 594,1204Z"],
    [GOLD, "M334,1170 354,1162 372,1168 410,1168 446,1170 480,1184 510,1192 506,1206 478,1222 466,1240 462,1272 448,1292 438,1308 404,1314 384,1326 374,1310 370,1296 358,1298 366,1270 360,1250 370,1230 364,1216 374,1204 344,1200 340,1190Z M504,1250 512,1252 508,1256Z"],
    [GOLD, "M568,1108 590,1106 600,1098 614,1096 622,1084 640,1084 658,1094 658,1108 642,1114 644,1146 660,1164 668,1190 696,1206 698,1214 724,1230 730,1244 716,1238 704,1244 712,1264 702,1284 694,1286 704,1260 696,1238 676,1232 660,1218 646,1206 628,1190 616,1166 606,1146 586,1148 576,1154 566,1136Z M648,1290 686,1286 682,1310 660,1300Z M588,1226 602,1218 604,1256 590,1264Z"],
    [SEA, "M866,1200 872,1172 884,1150 890,1124 908,1104 926,1080 934,1100 948,1096 940,1110 920,1112 932,1128 950,1140 970,1128 994,1126 1014,1144 1040,1164 1062,1180 1072,1200 1056,1222 1036,1224 1004,1208 970,1200 930,1204 900,1220 880,1218Z M970,1100 986,1088 1014,1082 1036,1074 1030,1094 1014,1110 996,1124 976,1118Z M850,1226 870,1222 894,1228 876,1236 856,1238Z"],
    [SEA, "M1140,1140 1150,1108 1180,1094 1200,1080 1234,1086 1232,1104 1214,1118 1222,1132 1200,1134 1192,1150 1220,1180 1236,1200 1248,1196 1256,1220 1240,1224 1248,1300 1216,1316 1186,1306 1174,1280 1182,1240 1196,1236 1180,1220 1160,1180Z"],
  ],
};

const northAsia: Frame = {
  t: "translate(2950 600) scale(.478316 .510204)",
  land: [
    "M313,757 326,760 328,796 350,806 338,790 340,770 330,756 308,746 290,748 286,720 290,690 276,670 280,650 300,640 306,660 330,680 354,684 340,664 320,656 316,642 346,628 370,626 384,646 402,656 400,680 396,700 408,716 416,700 414,650 396,636 378,620 376,574 410,570 444,568 452,572 444,580 458,592 452,576 468,560 458,540 450,528 466,512 460,504 480,486 510,474 540,464 560,458 600,448 620,448 634,466 634,446 624,432 654,430 652,404 672,372 692,362 716,376 710,386 692,396 724,402 736,412 734,428 756,416 784,418 806,432 808,450 820,462 820,490 800,512 770,536 750,560 722,580 704,608 730,594 760,576 786,562 812,572 818,612 826,608 820,580 850,568 884,574 890,592 920,600 950,602 954,576 968,568 990,580 1002,590 1020,582 1022,600 1030,630 1012,624 1030,650 1044,682 1060,690 1078,650 1096,664 1124,658 1150,672 1150,660 1176,660 1172,636 1186,628 1194,606 1230,612 1262,622 1240,630 1250,650 1270,632 1304,632 1312,650 1336,680 1350,686 1400,678 1430,682 1446,700 1448,730 1464,740 1462,770 1474,740 1500,732 1534,738 1560,736 1700,760 1700,900 1560,1010 1534,1010 1510,1020 1486,1040 1476,1070 1490,1080 1484,1110 1472,1130 1470,1150 1446,1162 1444,1178 1428,1186 1420,1208 1404,1220 1396,1180 1390,1130 1396,1100 1420,1070 1446,1050 1470,1020 1500,1000 1522,958 1510,950 1494,960 1490,974 1456,1000 1452,972 1430,974 1408,976 1390,1000 1370,1034 1350,1044 1310,1028 1290,1038 1250,1036 1216,1040 1190,1060 1150,1110 1114,1142 1136,1160 1140,1150 1152,1170 1160,1156 1184,1160 1200,1180 1196,1220 1184,1270 1150,1310 1126,1350 1100,1372 1076,1374 1062,1374 1040,1390 1014,1412 1010,1430 1016,1450 1032,1468 1034,1496 1000,1506 998,1480 1004,1462 984,1450 976,1440 968,1424 960,1426 926,1440 938,1412 930,1406 900,1428 876,1442 882,1456 900,1468 920,1462 940,1468 910,1480 896,1500 912,1520 930,1560 910,1548 932,1569 300,1569 300,770Z",
    "M20,566 38,520 50,492 80,464 118,442 150,434 180,412 200,402 214,412 206,436 170,458 120,486 90,514 70,546 48,582Z M38,112 56,90 74,98 66,116Z M18,136 34,126 60,146 46,160 22,150Z M90,154 104,148 124,146 118,166 92,174Z M134,148 152,138 160,120 168,134 158,152 140,154Z M60,178 80,182 62,196Z M70,66 86,64 82,70Z M66,130 78,136 74,150 64,142Z M102,130 116,126 112,136Z M44,184 56,188 50,202Z M130,74 144,76 138,80Z M0,184 10,188 2,194Z",
    "M576,112 590,136 606,152 598,176 600,188 576,196 552,208 526,188 530,172 544,164 540,146 556,126Z M548,240 568,212 604,200 608,222 622,208 634,222 634,250 630,276 622,290 602,282 580,272 562,262Z M518,208 540,210 548,220 534,230Z M632,340 646,300 660,268 670,254 676,274 668,294 688,272 704,290 708,306 698,324 660,330 640,344Z M504,119 520,122 506,124Z M354,142 370,138 368,144Z M798,532 814,536 808,548 798,542Z",
    "M1140,490 1150,460 1162,448 1176,464 1190,472 1200,452 1218,466 1208,480 1214,508 1190,504 1168,518 1150,506Z M1222,464 1246,480 1240,496 1224,500 1218,480Z M1264,482 1284,490 1304,488 1320,506 1296,514 1270,496Z M1188,566 1204,562 1222,580 1220,586 1190,576Z M1182,544 1190,546 1188,556Z",
    "M1200,1332 1222,1352 1248,1364 1226,1370 1216,1386 1190,1382 1184,1390 1178,1380 1200,1366Z M1208,1162 1218,1166 1222,1210 1240,1262 1222,1260 1212,1284 1218,1310 1206,1300 1210,1250 1204,1210Z",
  ],
  lines: [
    "M324,1152 344,1180 370,1226 410,1226 436,1248 474,1264 M460,1256 442,1274 440,1300 408,1300 400,1330 370,1340 374,1370 370,1386 330,1380 300,1374 260,1380 230,1392 210,1408 M370,1386 330,1412 300,1420 280,1432 296,1450 300,1470 344,1500 M200,1432 280,1432 M860,1248 880,1252 900,1240 914,1200 910,1186 940,1172 970,1174 990,1190 1010,1248 1050,1268 1056,1288 1106,1278 1104,1300 1084,1334 1060,1336 1060,1374 M966,1424 1000,1396 1040,1384 1060,1376 M984,1452 1016,1450",
  ],
  regions: [
    [PURPLE, "M474,1266 500,1244 532,1230 558,1234 564,1246 600,1248 614,1240 610,1216 624,1202 664,1218 672,1238 714,1236 742,1246 756,1258 790,1258 830,1240 860,1248 850,1280 872,1286 884,1282 906,1304 880,1306 860,1316 832,1336 796,1334 798,1356 776,1378 740,1384 704,1394 660,1380 626,1378 590,1376 576,1350 550,1338 514,1330 514,1302 500,1286Z"],
  ],
};

const southAsia: Frame = {
  t: "translate(3100 1300) scale(.446429 .446429)",
  land: [
    "M-2,0 600,0 600,70 606,92 620,100 622,108 650,104 672,108 640,126 624,150 640,170 650,196 662,210 664,236 656,262 640,290 620,320 590,344 550,350 520,364 492,372 498,390 494,372 468,372 452,378 430,400 436,416 456,444 474,470 480,500 474,520 448,534 426,556 418,544 434,532 414,532 404,522 392,508 378,502 362,502 360,492 346,492 344,510 338,530 336,552 348,580 360,598 380,606 392,630 402,664 384,658 366,636 352,600 330,580 324,556 332,530 324,490 320,456 306,436 302,430 296,444 284,446 272,454 268,420 254,398 240,380 234,356 224,340 214,340 212,352 184,362 158,374 154,390 130,402 110,428 88,442 84,450 -2,450Z",
    "M62,552 74,564 82,586 70,600 58,598 56,572Z M280,608 304,610 330,634 360,660 384,676 400,700 420,720 432,734 430,768 408,758 380,736 350,700 330,670 300,634Z M432,776 460,778 490,790 520,788 552,804 550,810 500,802 450,792Z M560,808 590,812 620,812 650,812 640,818 600,816Z M620,824 640,828 634,832Z M690,832 710,818 736,812 712,826Z",
    "M480,668 500,664 510,664 530,650 560,632 580,606 594,592 618,610 600,622 600,650 614,668 598,676 598,696 580,720 576,740 560,742 540,732 500,728 492,706 480,690Z M638,680 660,674 690,676 708,668 700,680 650,682 640,690 640,704 668,702 650,716 664,736 672,750 656,748 650,730 640,734 640,766 630,764 622,736 630,706Z M746,664 756,656 752,678Z M756,730 790,734 770,738Z M728,734 740,736 732,740Z",
    "M804,700 824,694 842,706 836,718 850,736 870,720 896,710 940,724 976,738 1008,752 1022,772 1036,778 1030,790 1050,820 1076,836 1050,832 1020,808 990,796 972,818 940,818 916,800 900,790 906,770 880,750 850,744 834,736 820,742 826,724 808,716Z M1050,770 1080,768 1104,750 1096,766 1070,774Z M1140,766 1158,784 1146,776Z M1210,824 1226,830 1216,830Z",
    "M644,418 668,420 668,440 656,456 660,484 648,484 638,464 640,440Z M648,490 662,500 654,504Z M668,520 690,526 680,546Z M690,540 708,552 700,562Z M700,510 714,520 712,534Z M696,574 720,556 730,580 720,600 708,598 700,586Z M632,522 602,558 616,536Z M660,314 656,340 646,356 640,344 650,320Z M476,402 494,394 502,402 486,418 474,410Z",
    "M938,40 950,56 952,80 938,104 936,134 918,136 900,140 880,150 860,166 870,146 840,152 810,158 800,160 812,150 840,142 866,144 876,126 900,124 916,110 930,96 932,70Z M820,176 840,162 846,172Z M782,182 800,172 806,190 796,208 790,196Z",
    "M1432,1264 1450,1276 1482,1274 1474,1296 1458,1308 1440,1342 1432,1332 1438,1312 1418,1304 1436,1290Z M1404,1332 1418,1346 1402,1370 1392,1384 1374,1404 1350,1444 1316,1436 1320,1424 1350,1400 1382,1366Z M1408,1228 1426,1244 1418,1240Z M1278,988 1306,1008 1306,1012Z",
  ],
  lines: [
    "M66,230 100,238 150,264 176,270 174,292 130,286 92,272 58,252Z M186,286 200,264 232,268 232,286Z M176,296 204,300 204,312 236,316 M306,262 328,290 312,330 330,340 342,362 356,368 346,390 312,402 316,430 330,450 336,490 M356,380 370,356 388,350 420,342 444,352 452,376 M356,384 366,424 400,418 426,440 430,476 M390,362 400,380 430,400 456,460 458,480 M386,500 386,484 420,480 456,478 456,510 430,530 M484,672 510,666 540,668 566,662 574,628 604,624 M940,726 940,818 M354,596 366,602",
  ],
  regions: [
    [RED, "M26,142 38,163 44,190 36,196 44,213 66,228 58,250 92,272 132,286 174,294 176,270 182,272 184,284 196,290 230,287 234,272 250,262 268,250 290,246 306,266 274,290 262,322 248,330 242,358 236,336 224,340 222,330 236,314 204,311 196,298 180,294 186,322 178,326 186,362 158,374 154,390 130,402 110,428 88,442 58,462 56,490 52,530 36,548 20,568 10,557 0,531 -16,497 -26,471 -40,429 -46,377 -56,363 -62,374 -80,379 -98,360 -80,348 -106,345 -106,334 -72,329 -88,302 -94,283 -80,271 -56,266 -36,237 -20,221 -20,202 -12,194 -28,177 -30,156 8,158Z"],
    [GREEN, "M962,848 972,866 978,896 996,900 1002,930 1016,966 1046,984 1062,1016 1080,1024 1084,1040 1108,1064 1116,1090 1120,1118 1112,1160 1090,1196 1072,1240 1068,1272 1044,1276 1018,1292 1000,1280 978,1292 940,1280 924,1266 920,1240 906,1232 894,1180 890,1202 864,1222 844,1186 820,1168 800,1164 764,1168 720,1180 694,1190 684,1204 640,1204 620,1216 600,1224 566,1210 576,1200 576,1170 564,1130 554,1100 552,1070 542,1046 552,1022 586,994 620,986 652,976 670,950 676,936 690,944 704,914 740,892 752,912 780,908 784,880 800,866 824,858 876,870 868,882 860,904 880,920 930,948 946,940 950,880Z M996,1334 1020,1340 1044,1334 1044,1354 1036,1370 1022,1384 1008,1372Z"],
  ],
};

const sheets: Frame[] = [arctic, svalbard, states, southAmerica, europe, africa, euroRegions, northAsia, southAsia];

@customElement("exposure-map")
export class ExposureMap extends LitElement {
  static styles = css`
    :host { display: block; }
    svg { display: block; width: 100%; height: auto; }
    .land { fill: #c8ccd5; }
    .line { fill: none; stroke: #fff; stroke-width: 2; stroke-linejoin: round; vector-effect: non-scaling-stroke; }
    .region { stroke: #fff; stroke-width: 2; stroke-linejoin: round; vector-effect: non-scaling-stroke; }
  `;
  render() {
    return html`<svg viewBox="1512 542 2327 1533" role="img" aria-label="Exposure map">
      ${sheets.map((s) => svg`<g transform=${s.t}>${(s.land ?? []).map((d) => svg`<path class="land" d=${d} />`)}</g>`)}
      ${sheets.map((s) => svg`<g transform=${s.t}>${(s.lines ?? []).map((d) => svg`<path class="line" d=${d} />`)}</g>`)}
      ${sheets.map((s) => svg`<g transform=${s.t}>${(s.regions ?? []).map(([f, d]) => svg`<path class="region" fill=${f} d=${d} />`)}</g>`)}
    </svg>`;
  }
}

@customElement("stat-card")
export class StatCard extends LitElement {
  @property() label = "";
  @property() value = "";
  @property() tone = "";
  @property({ type: Boolean, reflect: true }) active = false;
  @property({ type: Boolean, reflect: true }) large = false;
  static styles = css`
    :host {
      display: flex; flex-direction: column; gap: 22px; box-sizing: border-box;
      height: 204px; padding: 28px 42px; border: 2px solid #dfe3ea; border-radius: 20px; background: #fff;
      font-family: Inter, "Liberation Sans", sans-serif;
    }
    :host([active]) {
      border: 4px solid transparent; padding: 26px 40px;
      background: linear-gradient(#fff, #fff) padding-box,
        linear-gradient(55deg, #6d82b1 38%, #6b5238 54%, #d3a068 81%, #ecd0b8 100%) border-box;
    }
    :host([large]) { height: 321px; gap: 37px; padding: 47px 69px; border-width: 3px; border-radius: 24px; box-shadow: 0 0 42px #dfb478; }
    :host([large][active]) { border-width: 6px; padding: 44px 66px; }
    .label { display: flex; align-items: center; gap: 15px; font-size: 28px; line-height: 44px; font-weight: 500; color: #5c6579; white-space: nowrap; }
    .dot { width: 30px; height: 30px; border-radius: 50%; }
    .value { font-size: 62px; line-height: 70px; font-weight: 600; color: #000; }
    .red { background: #d86262; }
    .gold { background: #e1bc86; }
    .purple { background: #9474c8; }
    :host([large]) .label { gap: 24px; font-size: 44px; line-height: 66px; }
    :host([large]) .dot { width: 48px; height: 48px; }
    :host([large]) .value { font-size: 100px; line-height: 110px; }
  `;
  render() {
    return html`
      <div class="label">${this.tone ? html`<span class="dot ${this.tone}"></span>` : ""}<span>${this.label}</span></div>
      <div class="value">${this.value}</div>`;
  }
}

const icons = {
  home: svg`<path d="M2.2 10.6 10.9 3.4a1.7 1.7 0 0 1 2.2 0l8.7 7.2M3.8 9.4v9.2a3 3 0 0 0 3 3h10.4a3 3 0 0 0 3-3V4.6"/><g fill="currentColor" stroke="none"><rect x="8.9" y="10.8" width="2.6" height="2.6" rx=".6"/><rect x="12.6" y="10.8" width="2.6" height="2.6" rx=".6"/><rect x="8.9" y="14.5" width="2.6" height="2.6" rx=".6"/><rect x="12.6" y="14.5" width="2.6" height="2.6" rx=".6"/></g>`,
  globe: svg`<circle cx="12" cy="12" r="9.7"/><path d="M2.6 12h4.6c1.3 0 1.5.7 1.7 2l.7 2.8-.5 4.4M10.2 2.6c0 1.6.6 1.7 1.5 2.6s.6 2.4 1.6 3.2 2 .7 3-.1l3.6-2.9M21.6 12.7c-1.7-.3-2.6.5-4.2.5-2.2 0-3.2.8-2.8 2.4s1.3 2.2-.2 5.7"/>`,
  apps: svg`<rect x="3" y="3.4" width="8" height="7.6" rx="2.6"/><rect x="3" y="13.4" width="8" height="7.6" rx="2.6"/><rect x="13" y="13.4" width="8" height="7.6" rx="2.6"/><circle cx="17" cy="7.2" r="2.3"/><path d="M17 3.2v1.5M17 9.7v1.5M13 7.2h1.5M19.5 7.2H21M14.2 4.4l1 1M18.8 9l1 1M14.2 10l1-1M18.8 5.4l1-1"/>`,
  pin: svg`<path d="M12 18.2c-.7 0-1.300-.3-2.200-1.100C7.400 15 5 12.400 5 9.200a7 7 0 0 1 14 0c0 3.200-2.400 5.800-4.800 7.900-.9.8-1.500 1.100-2.200 1.100Z"/><circle cx="12" cy="9.3" r="2.6"/><path d="M6 16.800c-1 .7-1.800 2-1.800 3.200 0 1 .7 1.500 1.700 1.500h12.200c1 0 1.700-.5 1.700-1.500 0-1.200-.8-2.500-1.800-3.200"/>`,
  folder: svg`<path d="M14.3 21.200H5.600a3.400 3.400 0 0 1-3.400-3.400V6.200a3 3 0 0 1 3-3h3.200a3.400 3.400 0 0 1 3.400 3.400v1.200M8 7.800h10.400a3.400 3.400 0 0 1 3.400 3.200"/><path d="M16.400 13.600h4.400M17.400 13.600v2.800l-1.700 2.200h5.800l-1.700-2.200v-2.800M18.600 18.600v3"/>`,
};

/* Brighter dots of the backdrop grid: column, row, opacity. */
const sparks: [number, number, number][] = [
  [53, 1, 0.6], [55, 1, 0.35], [56, 1, 0.2], [54, 2, 0.3], [55, 2, 0.4], [56, 2, 0.25],
  [70, 1, 0.6], [71, 1, 0.4], [72, 1, 0.5], [69, 2, 0.5], [70, 2, 0.45], [71, 2, 0.3],
  [69, 3, 0.6], [68, 3, 0.35], [70, 3, 0.25], [67, 4, 0.7], [68, 4, 0.8], [69, 4, 0.4],
  [66, 5, 0.6], [67, 5, 0.3], [68, 5, 0.6], [65, 6, 0.5], [66, 6, 0.4], [67, 6, 0.9],
  [65, 7, 0.5], [66, 7, 0.8], [64, 8, 0.9], [65, 8, 0.5], [64, 9, 0.4],
];

@customElement("app-root")
export class AppRoot extends LitElement {
  static styles = css`
    :host {
      display: block; position: relative; height: 100vh; overflow: hidden; border-radius: 28px; background: #151719;
      font-family: Inter, "Liberation Sans", sans-serif; color: #000;
    }
    .backdrop { position: absolute; inset: 0; width: 100%; height: 100%; }
    .stage { position: relative; display: grid; grid-template-columns: 690fr 2699fr 707fr; padding-top: 104px; }
    .window { grid-column: 2; display: grid; grid-template-columns: 487px 1fr; grid-template-rows: minmax(0, 1fr); height: calc(100vh - 94px); border-radius: 26px; overflow: hidden; background: #f8f9fb; }

    .sidebar {
      display: flex; flex-direction: column; box-sizing: border-box; padding: 35px 23px 36px 30px; color: #a3a3a3;
      background:
        radial-gradient(ellipse 280px 220px at 0 0, #c4b9a1 0%, #a07a4a 9%, #5e3e20 22%, #2c1b0e 42%, #100904 66%, transparent 100%),
        radial-gradient(ellipse 210px 310px at 100% 100%, #c0b8b0 0%, #c49758 13%, #7a5028 28%, #2f1a0a 50%, #0d0603 76%, transparent 100%),
        #000;
    }
    .logo { display: flex; align-items: center; gap: 5px; color: #fff; text-decoration: none; font: 700 46px/60px "Liberation Serif", serif; -webkit-text-stroke: 1px #fff; }
    .logo svg { width: 60px; height: 60px; }
    nav { display: flex; flex-direction: column; gap: 8px; margin-top: 62px; }
    nav + nav { margin-top: 174px; }
    nav a, nav button {
      display: flex; align-items: center; gap: 13px; box-sizing: border-box; height: 76px; padding: 0 28px; border: 2px solid transparent; border-radius: 10px;
      color: inherit; text-decoration: none; font: 500 28px/36px Inter, "Liberation Sans", sans-serif; background: none;
    }
    nav a svg { width: 46px; height: 46px; fill: none; stroke: currentColor; stroke-width: 1.3; stroke-linecap: round; stroke-linejoin: round; }
    nav a.bare { padding-left: 86px; }
    nav button { padding: 0 41px 0 0; justify-content: space-between; }
    nav button svg { width: 26px; height: 26px; fill: none; stroke: currentColor; stroke-width: 2; }
    nav a.current {
      color: #eee;
      background: linear-gradient(105deg, #1f1f1f 0%, #141414 40%, #000 80%) padding-box,
        linear-gradient(100deg, #cfcfcf 0%, #8d8a86 25%, #705537 55%, #35353c 80%, #8a6a45 100%) border-box;
    }
    .user { display: flex; align-items: center; margin-top: auto; padding: 0 33px 0 25px; }
    .avatar { display: grid; place-items: center; width: 84px; height: 84px; border-radius: 50%; background: #101214; }
    .avatar span {
      display: grid; place-items: center; box-sizing: border-box; width: 68px; height: 68px; border: 2px solid transparent; border-radius: 50%; font-size: 34px; color: #fff;
      background: linear-gradient(#101214, #101214) padding-box, linear-gradient(70deg, #6b4a2c, #15171a 40%, #15171a 60%, #3f4350) border-box;
    }
    .who { flex: 1; padding-left: 22px; line-height: 40px; white-space: nowrap; }
    .name { font-size: 25px; font-weight: 600; color: #fff; }
    .org { font-size: 22px; color: #c9ccd2; }
    .exit { padding: 0; border: 0; background: none; color: #fff; }
    .exit svg { display: block; width: 42px; height: 42px; fill: none; stroke: currentColor; stroke-width: 1.5; stroke-linecap: round; stroke-linejoin: round; }

    main { padding: 75px 113px 0; min-width: 0; }
    h1, h2, h3, p { margin: 0; }
    h1 { font-size: 54px; line-height: 70px; font-weight: 500; }
    .sub { margin-top: 11px; font-size: 25px; line-height: 36px; font-weight: 500; color: #5c6579; }
    .bar { display: flex; align-items: center; justify-content: space-between; margin-top: 75px; }
    h2 { font-size: 35px; line-height: 44px; font-weight: 600; color: #1f242d; }
    .pick { position: relative; }
    .pick select { appearance: none; width: 236px; height: 91px; padding: 0 30px; border: 2px solid #dfe3ea; border-radius: 14px; background: #fff; color: #9aa0ab; font: 400 28px Inter, "Liberation Sans", sans-serif; }
    .pick svg { position: absolute; right: 34px; top: 33px; width: 26px; height: 26px; fill: none; stroke: #9aa0ab; stroke-width: 2; pointer-events: none; }
    .stats { display: grid; grid-template-columns: repeat(4, 1fr); gap: 32px; }
    .panel { margin-top: 31px; border: 2px solid #dfe3ea; border-radius: 20px; background: #fff; }
    table { width: 100%; table-layout: fixed; border-collapse: collapse; text-align: left; font-size: 24px; white-space: nowrap; }
    th { height: 79px; padding: 0; border-bottom: 2px solid #e4e7ec; font-size: 22px; font-weight: 500; color: #4b5566; }
    td { height: 136px; padding: 0; font-weight: 500; }
    .c1 { width: 20.1%; } .c2 { width: 9.1%; } .c3 { width: 14.4%; } .c4 { width: 16.4%; } .c5 { width: 11.5%; } .c6 { width: 18.8%; }
    .first { padding-left: 43px; }
    .right { text-align: right; }
    .mid { text-align: center; }
    .dark { color: #262c38; }
    .region { display: flex; align-items: center; gap: 24px; line-height: 34px; }
    .region svg { width: 60px; height: 60px; }
    .region a { color: #3559a6; text-decoration: none; }
    .small { font-size: 21px; font-weight: 400; color: #5c6579; line-height: 34px; }
    .big { line-height: 34px; }
    .tag { display: inline-block; padding: 0 24px; border-radius: 26px; line-height: 52px; background: #fae4e4; color: #a92525; }
    .inline { display: flex; align-items: center; gap: 8px; }
    .inline svg { width: 30px; height: 30px; }
    td .inline { gap: 18px; padding-left: 10px; color: #303746; }
    td .inline svg { width: 27px; height: 27px; }

    .floating { position: absolute; left: 5.37%; top: 661px; width: 754px; display: flex; flex-direction: column; gap: 49px; }
    .tip { position: absolute; right: 3.66%; top: 577px; width: 802px; border-radius: 22px 22px 0 0; background: #fff; box-shadow: 0 0 50px #dfb478; }
    .tip header { display: flex; box-sizing: border-box; height: 188px; padding: 40px; border-radius: 22px 22px 0 0; background: #1f242c; color: #fff; }
    .tip header svg { width: 50px; height: 50px; margin-top: 29px; }
    .place { flex: 1; padding-left: 20px; }
    .place h3 { font-size: 37px; line-height: 62px; font-weight: 600; }
    .place p { font-size: 29px; line-height: 44px; font-weight: 300; }
    .pill { align-self: flex-start; padding: 0 20px; border-radius: 25px; line-height: 50px; font-size: 28px; font-weight: 500; background: #f6ecdd; color: #7a5236; }
    dl { display: flex; flex-direction: column; gap: 20px; margin: 0; padding: 40px 40px 41px; font-size: 28px; }
    dl div { display: flex; justify-content: space-between; padding: 0 21px; border-radius: 22px; line-height: 96px; background: #f8f9fb; }
    dt { font-weight: 300; color: #5c6579; }
    dd { margin: 0; font-weight: 700; }
  `;

  private burst() {
    const n = 22;
    return html`<svg viewBox="-36 -36 72 72" aria-hidden="true" fill="currentColor">
      ${Array.from({ length: n }, (_, i) => {
        const turn = ((i + 0.5) * 360) / n;
        const w = 0.7 + 1.5 * Math.pow((1 - Math.cos((turn * Math.PI) / 180)) / 2, 0.8);
        return svg`<path transform="rotate(${turn})" d="M17 ${-w / 2}L26 ${-w}L35 ${-w * 0.8}V${w * 0.8}L26 ${w}L17 ${w / 2}Z" />`;
      })}
    </svg>`;
  }

  private usFlag() {
    return html`<svg viewBox="0 0 60 60" aria-hidden="true">
      <clipPath id="us"><circle cx="30" cy="30" r="30" /></clipPath>
      <g clip-path="url(#us)">
        <rect width="60" height="60" fill="#fff" />
        ${[0, 1, 2, 3, 4, 5, 6].map((i) => svg`<rect y=${i * 9.2} width="60" height="4.6" fill="#c5363f" />`)}
        <rect width="45" height="32.2" fill="#2b3f78" />
        ${Array.from({ length: 45 }, (_, i) => svg`<circle cx=${4 + (i % 9) * 4.8} cy=${4 + Math.floor(i / 9) * 6} r="1.2" fill="#fff" />`)}
      </g>
    </svg>`;
  }

  private euFlag() {
    const star = "M0-3 .8-.9 3-.9 1.2.4 1.9 2.6 0 1.3-1.9 2.6-1.2.4-3-.9-.8-.9Z";
    return html`<svg viewBox="0 0 60 60" aria-hidden="true">
      <circle cx="30" cy="30" r="30" fill="#0a3399" />
      ${Array.from({ length: 12 }, (_, i) => {
        const a = (i * Math.PI) / 6;
        return svg`<path d=${star} fill="#ffce1f" transform="translate(${30 + 18 * Math.sin(a)} ${30 - 18 * Math.cos(a)})" />`;
      })}
    </svg>`;
  }

  render() {
    const nav: [string, unknown, boolean][] = [
      ["Dashboard", icons.home, false],
      ["Monitor", icons.globe, true],
      ["Integrations", icons.apps, false],
      ["Registrations", icons.pin, false],
      ["Filings", icons.folder, false],
    ];
    const facts = [
      ["Nexus tracking:", "70%"],
      ["Taxable volume ($):", "$68,849"],
      ["Taxable volume ($) limit:", "$100,000"],
      ["Taxable volume (#):", "277"],
      ["Taxable volume (#) limit:", "-"],
      ["Physical presence:", "No"],
    ];
    return html`
      <svg class="backdrop" viewBox="0 0 4800 2560" preserveAspectRatio="xMidYMid slice" aria-hidden="true">
        <defs>
          <pattern id="dots" x="-27.6" y="-24" width="62.4" height="54.65" patternUnits="userSpaceOnUse">
            <circle cx="31.2" cy="27.3" r="3" fill="#2c2f31" />
          </pattern>
        </defs>
        <rect width="4800" height="2560" fill="url(#dots)" />
        ${sparks.map(([c, r, o]) => svg`<circle cx=${3.6 + c * 62.4} cy=${3.3 + r * 54.65} r="3" fill="#fff" opacity=${o} />`)}
      </svg>
      <div class="stage">
        <div class="window">
          <aside class="sidebar">
            <a class="logo" href="#">${this.burst()}<span>sphere</span></a>
            <nav>
              ${nav.map(([t, icon, on]) => html`<a href="#" class=${on ? "current" : ""}><svg viewBox="0 0 24 24" aria-hidden="true">${icon}</svg>${t}</a>`)}
            </nav>
            <nav>
              <a class="bare" href="#">Transactions</a>
              <button type="button">Organization<svg viewBox="0 0 24 24" aria-hidden="true"><path d="m4 8.5 8 7.5 8-7.5" /></svg></button>
            </nav>
            <div class="user">
              <div class="avatar"><span>A</span></div>
              <div class="who"><div class="name">Nick Rudder</div><div class="org">Amazing Inc.</div></div>
              <button class="exit" type="button" aria-label="Log out">
                <svg viewBox="0 0 24 24"><path d="M10.5 4.2 7 1.8C5 .9 2.2 2 2.2 4.4v15.2c0 2.4 2.8 3.5 4.8 2.6 2-.8 3.5-1.6 3.5-3.6ZM10.5 4h5c1.6 0 2.5 1 2.5 2.6V8M10.5 20h5c1.6 0 2.5-1 2.5-2.6V16M13 12h9.500m-3-3.400 3.200 3.400-3.200 3.400" /></svg>
              </button>
            </div>
          </aside>
          <main>
            <h1>Monitor</h1>
            <p class="sub">Keep track of your tax exposure around the world</p>
            <div class="bar">
              <h2>Exposure map</h2>
              <div class="pick">
                <select aria-label="Filter regions"><option>All</option></select>
                <svg viewBox="0 0 24 24" aria-hidden="true"><path d="m4 8 8 8 8-8" /></svg>
              </div>
            </div>
            <exposure-map></exposure-map>
            <div class="stats">
              <stat-card label="Exposed regions" value="15" tone="red"></stat-card>
              <stat-card label="Approaching exposure" value="10" tone="gold" active></stat-card>
              <stat-card label="Nexus triggered" value="8" tone="purple"></stat-card>
              <stat-card label="All regions" value="150"></stat-card>
            </div>
            <div class="panel">
              <table>
                <colgroup><col class="c1" /><col class="c2" /><col class="c3" /><col class="c4" /><col class="c5" /><col class="c6" /><col /></colgroup>
                <thead>
                  <tr>
                    <th class="first">Region</th>
                    <th>Status</th>
                    <th class="right">Estimated tax liability</th>
                    <th class="mid">Trigger date</th>
                    <th class="right">Total transaction ($)</th>
                    <th class="mid dark">Physical presence</th>
                    <th class="dark"><span class="inline">Difficulty<svg viewBox="0 0 30 30" aria-hidden="true" fill="none" stroke="currentColor" stroke-width="2.6"><circle cx="15" cy="15" r="13" /><path d="M15 13.5v8M15 8.5v3" /></svg></span></th>
                  </tr>
                </thead>
                <tbody>
                  <tr>
                    <td class="first"><div class="region">${this.euFlag()}<div><a href="#">Europe</a><div class="small">European Union</div></div></div></td>
                    <td><span class="tag">Exposed</span></td>
                    <td class="right"><div class="big">$19,306.85</div><div class="small">€16,457.98</div></td>
                    <td class="mid">18-Sep-2023</td>
                    <td class="right">€81,511.53</td>
                    <td class="mid">No</td>
                    <td><span class="inline"><svg viewBox="0 0 27 27" aria-hidden="true"><rect x="0" y="19" width="3" height="8" fill="#7d8595" /><rect x="12" y="8" width="3" height="19" fill="#dfe2e8" /><rect x="24" y="2" width="3" height="25" fill="#dfe2e8" /></svg>Low</span></td>
                  </tr>
                </tbody>
              </table>
            </div>
          </main>
        </div>
      </div>
      <div class="floating">
        <stat-card large label="Exposed regions" value="15" tone="red"></stat-card>
        <stat-card large active label="Approaching exposure" value="10" tone="gold"></stat-card>
        <stat-card large label="Nexus triggered" value="8" tone="purple"></stat-card>
      </div>
      <section class="tip">
        <header>
          ${this.usFlag()}
          <div class="place"><h3>Chicago</h3><p>United States</p></div>
          <span class="pill">Approaching exposure</span>
        </header>
        <dl>${facts.map(([k, v]) => html`<div><dt>${k}</dt><dd>${v}</dd></div>`)}</dl>
      </section>
    `;
  }
}
